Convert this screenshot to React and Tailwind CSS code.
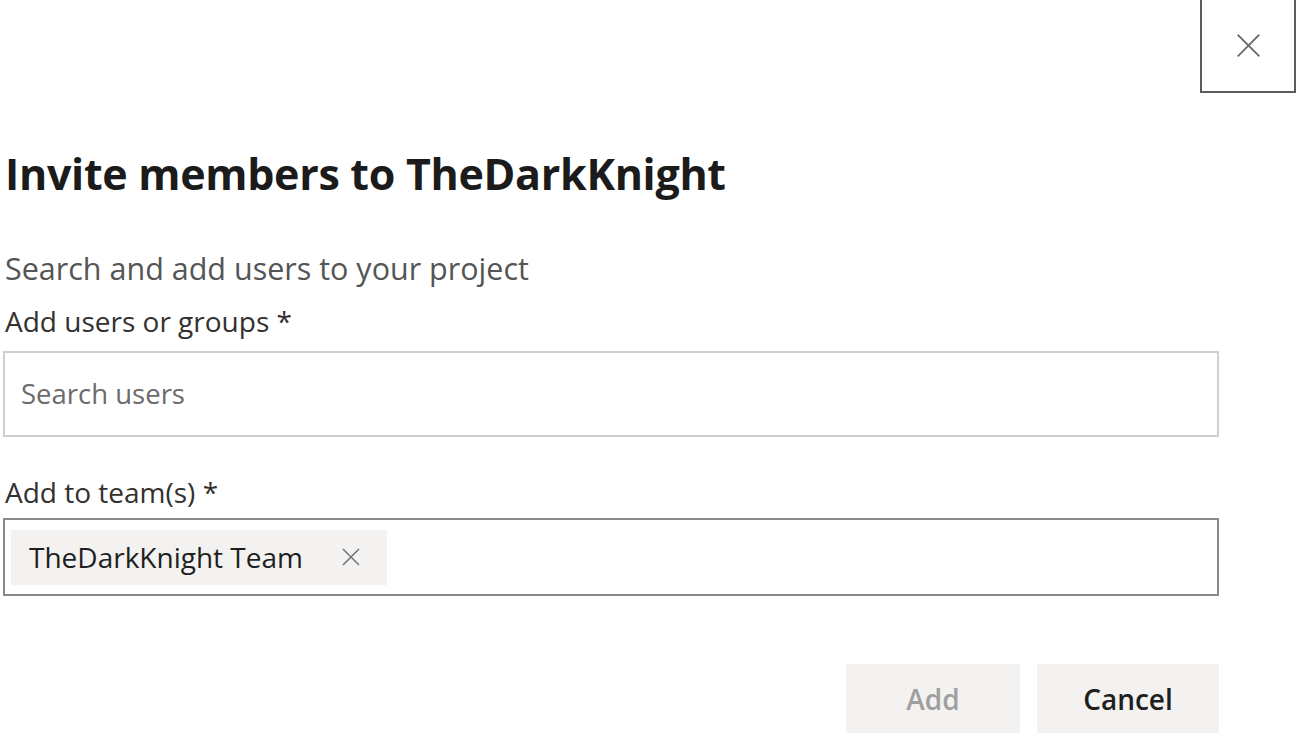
import React from 'react';

const XIcon = ({ className = '', stroke = '#6b6b6b', width = 2 }) => (
    <svg viewBox="0 0 24 24" className={className} fill="none" stroke={stroke} strokeWidth={width} strokeLinecap="square">
        <path d="M3 3L21 21M21 3L3 21" />
    </svg>
);

export default function App() {
    return (
        <div className="w-[1300px] h-[738px] bg-white overflow-hidden text-[#201f1e]" style={{ fontFamily: '"Open Sans", "Noto Sans", sans-serif' }}>
            {/* close */}
            <div className="flex justify-end pr-[4px]">
                <button className="w-[96px] h-[93px] border-x-2 border-b-2 border-[#5c5c5c] flex items-center justify-center">
                    <XIcon className="w-[27px] h-[27px]" width={1.6} />
                </button>
            </div>

            <div className="pl-[3px] w-[1219px]">
                <h1 className="mt-[54px] pl-[2px] text-[43px] leading-[54px] font-bold tracking-[-0.3px] text-[#1b1b1b]">
                    Invite members to TheDarkKnight
                </h1>

                <p className="mt-[47px] pl-[2px] text-[30.5px] leading-[40px] text-[#555555]">Search and add users to your project</p>
                <label className="block mt-[13px] pl-[2px] text-[28px] leading-[40px] text-[#323130]">Add users or groups *</label>

                <div className="mt-[10px] h-[86px] border-2 border-[#cfcfcf] flex items-center px-[16px]">
                    <span className="text-[27.5px] text-[#6b6b6b]">Search users</span>
                </div>

                <label className="block mt-[35px] pl-[2px] text-[28px] leading-[40px] text-[#323130]">Add to team(s) *</label>

                <div className="mt-[6px] h-[78px] border-2 border-[#8a8a8a] flex items-center px-[6px]">
                    <div className="h-[55px] w-[376px] bg-[#f3f2f1] flex items-center pl-[18px] gap-[38px]">
                        <span className="text-[28px] text-[#201f1e]">TheDarkKnight Team</span>
                        <XIcon className="w-[20px] h-[20px]" width={1.7} stroke="#707070" />
                    </div>
                </div>

                <div className="mt-[68px] flex justify-end gap-[17px]">
                    <button className="w-[174px] h-[69px] bg-[#f3f2f1] text-[28px] font-semibold text-[#a19f9d]">Add</button>
                    <button className="w-[182px] h-[69px] bg-[#f3f2f1] text-[28px] font-semibold text-[#201f1e]">Cancel</button>
                </div>
            </div>
        </div>
    );
}
